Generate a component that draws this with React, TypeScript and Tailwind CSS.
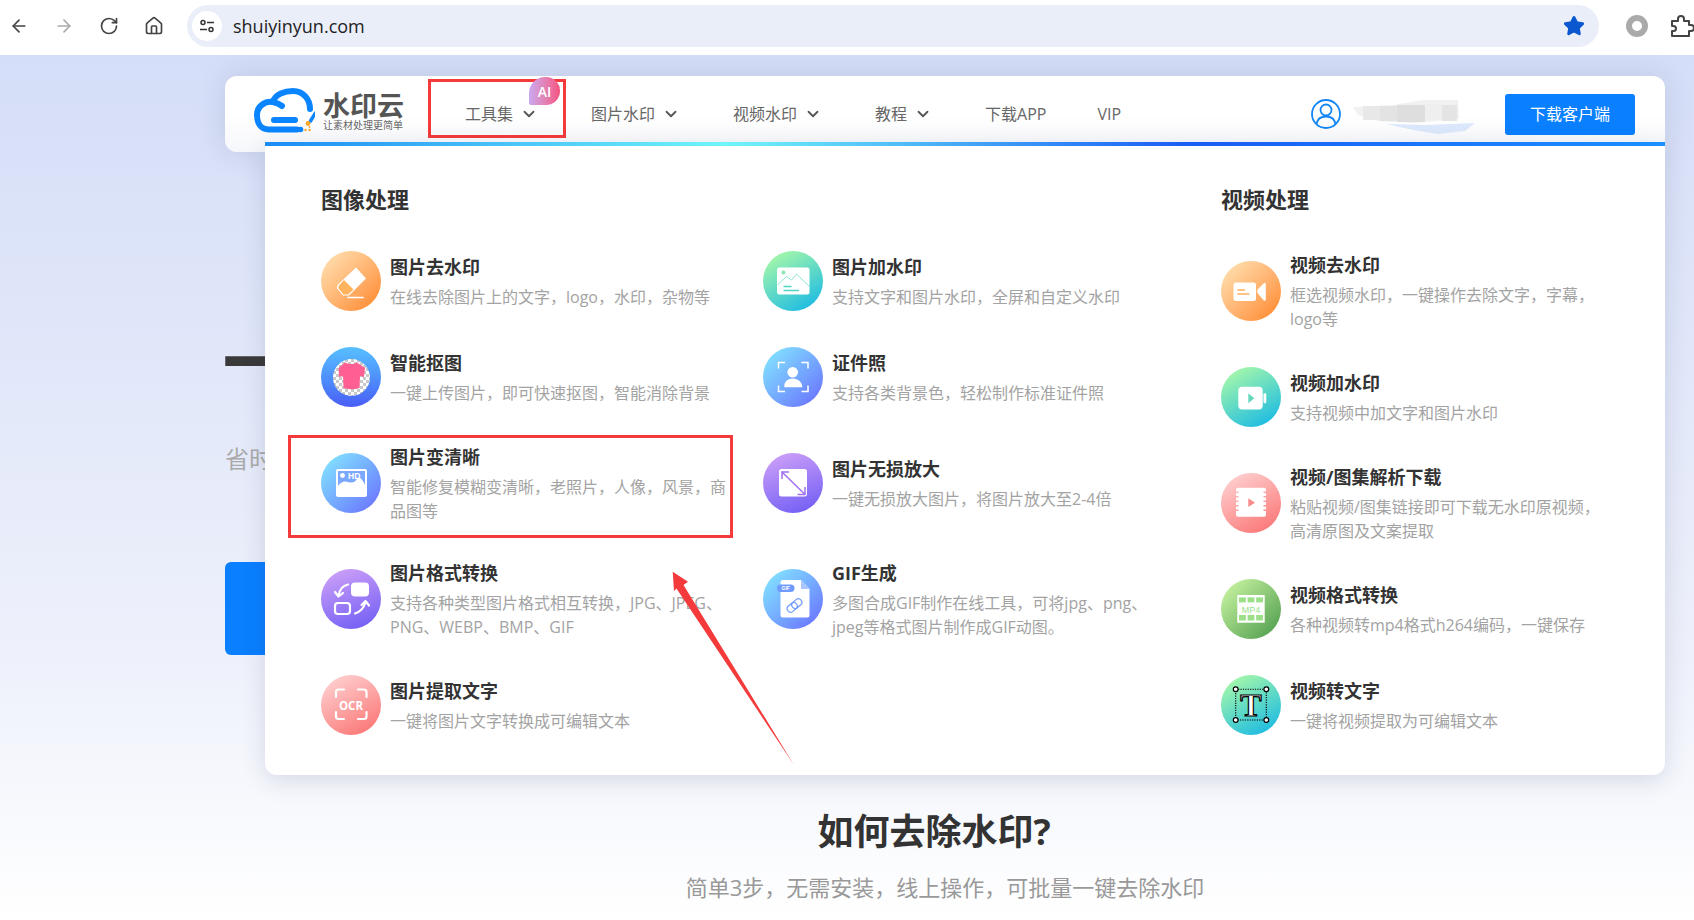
import React from "react";
import { ArrowLeft, ArrowRight, RotateCw, Home, Star, ChevronDown } from "lucide-react";

type Item = { title: string; desc: string; bg: string; icon: React.ReactNode };

const W = ({ children }: { children: React.ReactNode }) => (
  <svg viewBox="0 0 60 60" className="w-[60px] h-[60px]" fill="none">
    {children}
  </svg>
);

const EraserIcon = () => (
  <W>
    <path d="M35 16.5 45 27.5 28 44.5 22 44.5 16 37.5 Q15.5 35 17 33.5Z" fill="#fff" />
    <path d="M23 29 32.5 38.5 27 43.5 22.5 43.5 17.5 37.5Q17 35.5 18 34.5Z" fill="#ffb35c" />
    <path d="M27 46.5H42" stroke="#fff" strokeWidth="1.6" strokeLinecap="round" />
  </W>
);

const CutoutIcon = () => (
  <W>
    <defs>
      <pattern id="chk" width="6" height="6" patternUnits="userSpaceOnUse">
        <rect width="6" height="6" fill="#fff" />
        <rect width="3" height="3" fill="#c9c9c9" />
        <rect x="3" y="3" width="3" height="3" fill="#c9c9c9" />
      </pattern>
    </defs>
    <circle cx="30.5" cy="30.5" r="18.5" fill="url(#chk)" />
    <path d="M24 15.5 Q30 18.5 36 15.5 L44 21 43 30 39 29 38.5 41 Q30 43.5 22.5 41 L22 29 18 30 17.5 21Z" fill="#ff5f92" />
  </W>
);

const HdIcon = () => (
  <W>
    <rect x="15" y="16" width="31" height="28" rx="2" fill="#fff" />
    <rect x="17" y="18" width="27" height="15" fill="#7ba8ff" />
    <path d="M17 33 Q21 27 27 29 T36 26 T44 32 V35 H17Z" fill="#fff" />
    <circle cx="21.5" cy="22.5" r="2.4" fill="#fff" />
    <text x="27" y="26" fontSize="8.5" fontWeight="700" fill="#fff" fontFamily="Liberation Sans, sans-serif">HD</text>
  </W>
);

const ConvertIcon = () => (
  <W>
    <rect x="30" y="13.5" width="18" height="14" rx="4" fill="#fff" />
    <rect x="14" y="34" width="15" height="11" rx="3" fill="none" stroke="#fff" strokeWidth="2.2" />
    <path d="M27 15.5 Q19 17 17.5 27" stroke="#fff" strokeWidth="2.2" strokeLinecap="round" />
    <path d="M14 23 17.5 27.5 22 24" stroke="#fff" strokeWidth="2.2" strokeLinecap="round" strokeLinejoin="round" />
    <path d="M34 44.5 Q42 42 44.5 33" stroke="#fff" strokeWidth="2.2" strokeLinecap="round" />
    <path d="M40.5 36 44.5 32 48 36.5" stroke="#fff" strokeWidth="2.2" strokeLinecap="round" strokeLinejoin="round" />
  </W>
);

const OcrIcon = () => (
  <W>
    <path d="M15 22V17Q15 14.5 17.5 14.5H23M37 14.5H43Q45.5 14.5 45.5 17V22M45.5 37V41.5Q45.5 44 43 44H37M23 44H17.5Q15 44 15 41.5V37" stroke="#fff" strokeWidth="2.2" strokeLinecap="round" />
    <text x="30" y="34.5" textAnchor="middle" fontSize="11.5" fontWeight="700" fill="#fff" fontFamily="Open Sans, sans-serif">OCR</text>
  </W>
);

const WatermarkIcon = () => (
  <W>
    <rect x="14" y="16.5" width="32.5" height="27" rx="2.5" fill="#fff" />
    <circle cx="20.5" cy="21.5" r="2" fill="#8fe6b4" />
    <path d="M14.5 34 23.5 25.5 28.5 29 33.5 23 46.5 35.5" stroke="#5fd8c4" strokeWidth="0.7" />
    <path d="M20.5 35.5H28.5M20.5 39.5H36" stroke="#4fd6c0" strokeWidth="1.3" />
  </W>
);

const IdIcon = () => (
  <W>
    <path d="M15.5 21.5V15.5H22M38.5 15.5H45V21.5M45 38.5V44.5H38.5M22 44.5H15.5V38.5" stroke="#fff" strokeWidth="1.5" />
    <circle cx="29.7" cy="25.3" r="5.3" fill="#fff" />
    <path d="M21.3 40.3Q20.8 32 29.7 31.5 38.8 32 39.3 40.3Z" fill="#fff" />
  </W>
);

const EnlargeIcon = () => (
  <W>
    <rect x="16" y="16" width="28" height="27.5" rx="2.5" fill="#fff" />
    <path d="M19 19 41.5 41" stroke="#a06ff2" strokeWidth="1.5" />
    <path d="M19 26V19H26M34.5 41.5H42V34" stroke="#a06ff2" strokeWidth="1.5" />
  </W>
);

const GifIcon = () => (
  <W>
    <path d="M20 11H38L46.5 20V46Q46.5 48.5 44 48.5H20Q17.5 48.5 17.5 46V13.5Q17.5 11 20 11Z" fill="#fff" />
    <path d="M38 11 46.5 20H38Z" fill="#a9c6ff" />
    <rect x="14" y="15.5" width="17.5" height="7.5" rx="3.7" fill="#6f9bff" />
    <text x="22.7" y="21.3" textAnchor="middle" fontSize="5" fontWeight="700" fill="#fff" fontFamily="Liberation Sans, sans-serif">GIF</text>
    <g stroke="#6f9bff" strokeWidth="1.2" transform="rotate(-40 31.5 36.5)">
      <rect x="23" y="33" width="11" height="7" rx="3.5" />
      <rect x="29" y="33" width="11" height="7" rx="3.5" />
    </g>
  </W>
);

const VideoEraseIcon = () => (
  <W>
    <rect x="12.5" y="21.5" width="22.5" height="18.5" rx="2.5" fill="#fff" />
    <path d="M36.3 29.5Q36.3 28.5 37.3 27.8L42.8 22.2Q44.8 21 44.8 23.5V38Q44.8 40.5 42.8 39.4L37.3 33Q36.3 32 36.3 31Z" fill="#fff" />
    <path d="M16.3 29H24M16.3 33H28.3" stroke="#ffae5c" strokeWidth="1.7" />
  </W>
);

const VideoAddIcon = () => (
  <W>
    <rect x="17.3" y="19.7" width="24.4" height="22.7" rx="4" fill="#fff" />
    <rect x="42.5" y="26.3" width="2.8" height="10" rx="1.2" fill="#fff" />
    <path d="M27.3 26.3 33.3 31.3 27.3 36.3Z" fill="#63d8bc" />
  </W>
);

const VideoParseIcon = () => (
  <W>
    <path d="M17 14.7H43Q45 14.7 45 16.7V18.5H42.5V20H45V23H42.5V24.5H45V27.5H42.5V29H45V32H42.5V33.5H45V36.5H42.5V38H45V41.7Q45 43.7 43 43.7H17Q15 43.7 15 41.7V38H17.5V36.5H15V33.5H17.5V32H15V29H17.5V27.5H15V24.5H17.5V23H15V20H17.5V18.5H15V16.7Q15 14.7 17 14.7Z" fill="#fff" />
    <path d="M27.3 25.3 34 29.7 27.3 34Z" fill="#fb8b8b" />
  </W>
);

const Mp4Icon = () => (
  <W>
    <rect x="16.3" y="16" width="27.4" height="27.7" fill="#fff" />
    <g fill="#9bdf87">
      <rect x="18" y="18.4" width="6.8" height="5" />
      <rect x="26.6" y="18.4" width="6.8" height="5" />
      <rect x="35.2" y="18.4" width="6.8" height="5" />
      <rect x="18" y="36" width="6.8" height="5.5" />
      <rect x="26.6" y="36" width="6.8" height="5.5" />
      <rect x="35.2" y="36" width="6.8" height="5.5" />
    </g>
    <text x="30" y="33.5" textAnchor="middle" fontSize="9" fill="#9bdf87" fontFamily="Liberation Sans, sans-serif">MP4</text>
  </W>
);

const VideoTextIcon = () => (
  <W>
    <rect x="14.7" y="14.3" width="30.6" height="30.7" stroke="#000" strokeWidth="1.1" strokeDasharray="1.2 1.2" />
    {[[14.7, 14.3], [45.3, 14.3], [14.7, 45], [45.3, 45]].map(([x, y]) => (
      <circle key={x + "-" + y} cx={x} cy={y} r="2.4" fill="#fff" stroke="#000" strokeWidth="1.2" />
    ))}
    <text x="30" y="41" textAnchor="middle" fontSize="32" fontWeight="700" fill="#fff" stroke="#000" strokeWidth="1.2" fontFamily="Liberation Serif, serif">T</text>
  </W>
);

const orange = "bg-linear-to-br from-[#ffe6b8] to-[#ff8416]";
const sky = "bg-linear-to-br from-[#85ecff] to-[#6a68ff]";
const purple = "bg-[linear-gradient(160deg,#d3a4f8,#6c5af5)]";
const pink = "bg-[linear-gradient(150deg,#ffd9d9,#fb6d6d)]";
const mint = "bg-[linear-gradient(150deg,#b6ffa2,#0cb4ea)]";

const leftItems: Item[] = [
  { title: "图片去水印", desc: "在线去除图片上的文字，logo，水印，杂物等", bg: orange, icon: <EraserIcon /> },
  { title: "图片加水印", desc: "支持文字和图片水印，全屏和自定义水印", bg: mint, icon: <WatermarkIcon /> },
  { title: "智能抠图", desc: "一键上传图片，即可快速抠图，智能消除背景", bg: "bg-linear-to-b from-[#58c0ff] to-[#4a5cf6]", icon: <CutoutIcon /> },
  { title: "证件照", desc: "支持各类背景色，轻松制作标准证件照", bg: sky, icon: <IdIcon /> },
  { title: "图片变清晰", desc: "智能修复模糊变清晰，老照片，人像，风景，商品图等", bg: sky, icon: <HdIcon /> },
  { title: "图片无损放大", desc: "一键无损放大图片，将图片放大至2-4倍", bg: purple, icon: <EnlargeIcon /> },
  { title: "图片格式转换", desc: "支持各种类型图片格式相互转换，JPG、JPEG、PNG、WEBP、BMP、GIF", bg: purple, icon: <ConvertIcon /> },
  { title: "GIF生成", desc: "多图合成GIF制作在线工具，可将jpg、png、jpeg等格式图片制作成GIF动图。", bg: sky, icon: <GifIcon /> },
  { title: "图片提取文字", desc: "一键将图片文字转换成可编辑文本", bg: pink, icon: <OcrIcon /> },
];

const rightItems: Item[] = [
  { title: "视频去水印", desc: "框选视频水印，一键操作去除文字，字幕，logo等", bg: orange, icon: <VideoEraseIcon /> },
  { title: "视频加水印", desc: "支持视频中加文字和图片水印", bg: mint, icon: <VideoAddIcon /> },
  { title: "视频/图集解析下载", desc: "粘贴视频/图集链接即可下载无水印原视频，高清原图及文案提取", bg: pink, icon: <VideoParseIcon /> },
  { title: "视频格式转换", desc: "各种视频转mp4格式h264编码，一键保存", bg: "bg-linear-to-br from-[#d2fba8] to-[#46994a]", icon: <Mp4Icon /> },
  { title: "视频转文字", desc: "一键将视频提取为可编辑文本", bg: mint, icon: <VideoTextIcon /> },
];

const MenuItem = ({ item, width, boxed }: { item: Item; width: string; boxed?: boolean }) => (
  <div className="relative flex items-center">
    <div className={`w-[60px] h-[60px] rounded-full shrink-0 overflow-hidden ${item.bg}`}>{item.icon}</div>
    <div className={`ml-[9px] ${width}`}>
      <div className="h-[28px] mb-[4px] text-[18px] leading-[28px] font-bold text-[#333]">{item.title}</div>
      <div className="text-[16px] leading-[24px] text-[#a3a3a3]">{item.desc}</div>
    </div>
    {boxed && <div className="absolute -left-[33px] right-[30px] -top-[8px] -bottom-[15px] border-[3px] border-[#f43a3a]" />}
  </div>
);

const navItems = [
  { label: "工具集", arrow: true },
  { label: "图片水印", arrow: true },
  { label: "视频水印", arrow: true },
  { label: "教程", arrow: true },
  { label: "下载APP", arrow: false },
];

export default function App() {
  return (
    <div className="relative h-screen w-full overflow-hidden flex flex-col font-['Open_Sans','Noto_Sans_CJK_SC',sans-serif]">
      {/* browser bar */}
      <div className="h-[55px] bg-white flex items-center pl-[9px] pb-[3px] shrink-0">
        <div className="flex items-center gap-[25px] text-[#444]">
          <ArrowLeft size={20} />
          <ArrowRight size={20} className="text-[#aaa]" />
          <RotateCw size={20} />
          <Home size={20} />
        </div>
        <div className="ml-[23px] w-[1416px] h-[42px] rounded-full bg-[#eaeef8] flex items-center pl-[5px] pr-[14px]">
          <div className="w-[30px] h-[30px] rounded-full bg-white flex items-center justify-center">
            <svg width="16" height="16" viewBox="0 0 16 16" fill="none" stroke="#333" strokeWidth="1.5">
              <circle cx="4" cy="4.5" r="2" />
              <path d="M8 4.5h7M1 11.5h7" />
              <circle cx="12" cy="11.5" r="2" />
            </svg>
          </div>
          <span className="ml-[11px] text-[18px] text-[#222]">shuiyinyun.com</span>
          <Star size={22} className="ml-auto text-[#0b57d0] fill-[#0b57d0]" />
        </div>
        <div className="ml-[27px] w-[22px] h-[22px] rounded-full border-[6px] border-[#aaa]" />
        <svg viewBox="0 0 24 24" className="ml-[22px] w-[24px] h-[24px] shrink-0" fill="none" stroke="#444" strokeWidth="2" strokeLinejoin="round">
          <path d="M2 7H8V5Q8 2 11 2T14 5V7H19V11H21Q24 11 24 14T21 17H19V22H2V17H3.5Q6 17 6 14.5T3.5 12H2Z" />
        </svg>
      </div>

      {/* page */}
      <div className="relative flex-1 pl-[225px] bg-linear-to-b from-[#d5def8] via-[#eef1fb] via-70% to-white">
        <div className="w-[1440px] pt-[21px]">
          <div className="relative z-10 h-[76px] rounded-xl bg-linear-to-b from-white via-white via-50% to-[#f6f7fb] shadow-[0_0_30px_rgba(30,40,80,0.13)] flex items-center pl-[20px] pr-[30px]">
            <svg viewBox="0 0 70 60" className="w-[70px] h-[60px] shrink-0 -mt-[12px]" fill="none">
              <path d="M52 51.5H24C15 51.5 12 44 12 37 12 28 20 23 28 24 30 16 40 13 48 13 58 13 65 21 65 31" stroke="#0a84ff" strokeWidth="6" strokeLinecap="round" />
              <path d="M28 24Q33 25 37 28" stroke="#0a84ff" strokeWidth="6" strokeLinecap="round" />
              <path d="M29 42H50" stroke="#0a84ff" strokeWidth="6" strokeLinecap="round" />
              <circle cx="55.5" cy="51.5" r="2.8" fill="#0a84ff" />
              <path d="M70.5 35 65.5 43" stroke="#0a84ff" strokeWidth="3.5" strokeLinecap="round" />
              <circle cx="63" cy="45.5" r="2.4" fill="#f5a623" />
              <circle cx="60.5" cy="52" r="1.2" fill="#f5a623" />
              <circle cx="64.5" cy="52" r="1.2" fill="#f5a623" />
              <circle cx="64.5" cy="49" r="0.9" fill="#f5a623" />
            </svg>
            <div className="ml-[8px] w-[82px] shrink-0 -mt-[2px]">
              <div className="text-[27px] leading-[24px] font-bold text-[#555] whitespace-nowrap">水印云</div>
              <div className="text-[10px] leading-[14px] text-[#666] whitespace-nowrap">让素材处理更简单</div>
            </div>
            <nav className="ml-[60px] flex items-center gap-[53px] text-[16px] text-[#666]">
              {navItems.map((n) => (
                <div key={n.label} className="flex items-center gap-[7px]">
                  <span className="whitespace-nowrap">{n.label}</span>
                  {n.arrow && <ChevronDown size={18} strokeWidth={2.4} className="text-[#555]" />}
                </div>
              ))}
              <span className="-ml-[2px]">VIP</span>
            </nav>
            <div className="ml-auto flex items-center">
              <svg viewBox="0 0 30 30" className="w-[30px] h-[30px]" fill="none" stroke="#1486f5" strokeWidth="1.8">
                <circle cx="15" cy="15" r="14" />
                <circle cx="15" cy="11" r="5.5" />
                <path d="M5.5 25C6.5 19 11 17.5 15 17.5S23.5 19 24.5 25" />
              </svg>
              {/* blurred user name */}
              <svg viewBox="0 0 130 40" className="ml-[12px] mt-[6px] w-[130px] h-[40px]">
                <path d="M0 10 L40 8 L70 3 L105 3 L106 22 L60 26 L25 24 L5 18Z" fill="#f1f1f1" />
                <rect x="10" y="9" width="17" height="14" fill="#e8e8e8" />
                <rect x="27" y="9" width="17" height="15" fill="#e3e3e3" />
                <rect x="44" y="8" width="28" height="17" fill="#dedede" />
                <rect x="72" y="7" width="17" height="16" fill="#efefef" />
                <rect x="89" y="8" width="15" height="16" fill="#e4e4e4" />
                <path d="M33 27 L75 28 L122 26 L112 34 L85 37 L60 33Z" fill="#dbe7fa" />
              </svg>
              <button className="ml-[22px] w-[130px] h-[41px] rounded-[3px] bg-[#0a7fff] text-white text-[16px]">下载客户端</button>
            </div>

            {/* AI tag + highlight around 工具集 */}
            <div className="absolute left-[203px] top-[3px] w-[138px] h-[59px] border-[3px] border-[#f43a3a]" />
            <div className="absolute left-[304px] top-[1px] w-[31px] h-[28px] rounded-[16px_14px_14px_2px] bg-linear-to-r from-[#c8a8f0] to-[#f4517f] flex items-center justify-center text-white text-[14px] font-semibold">AI</div>

            {/* dropdown panel */}
            <div className="absolute left-[40px] top-[66px] w-[1400px] h-[633px] rounded-b-xl bg-white shadow-[0_6px_24px_rgba(30,40,80,0.14)]">
              <div className="h-[4px] bg-[linear-gradient(90deg,#1a8cf5,#70f5fa_33%,#1a5cf5_66%,#1a90ff)]" />
              <div className="flex pl-[56px] pt-[38px]">
                <div className="w-[900px] shrink-0">
                  <div className="text-[22px] leading-[30px] font-bold text-[#333] mb-[37px]">图像处理</div>
                  <div className="grid grid-cols-[442px_1fr] grid-rows-[60px_60px_80px_80px_60px] gap-y-[36px] items-center">
                    {leftItems.map((it) => (
                      <MenuItem key={it.title} item={it} width={it.title === "GIF生成" ? "w-[345px]" : "w-[340px]"} boxed={it.title === "图片变清晰"} />
                    ))}
                  </div>
                </div>
                <div>
                  <div className="text-[22px] leading-[30px] font-bold text-[#333] mb-[37px]">视频处理</div>
                  <div className="flex flex-col gap-[36px]">
                    {rightItems.map((it) => (
                      <MenuItem key={it.title} item={it} width="w-[320px]" />
                    ))}
                  </div>
                </div>
              </div>
            </div>
          </div>

          {/* page content behind the menu */}
          <h1 className="mt-[180px] -ml-[1px] text-[60px] leading-[60px] font-bold text-[#3a3a3a] [-webkit-text-stroke:2px_#3a3a3a]">一</h1>
          <p className="mt-[51px] text-[24px] leading-[32px] text-[#aaa]">省时</p>
          <div className="mt-[87px] w-[300px] h-[93px] rounded-md bg-[#0a7fff]" />
          <h2 className="mt-[153px] pr-[22px] text-center text-[36px] leading-[48px] font-bold text-[#333]">如何去除水印?</h2>
          <p className="mt-[15px] text-center text-[22px] leading-[32px] text-[#999]">简单3步，无需安装，线上操作，可批量一键去除水印</p>
        </div>
      </div>

      {/* red annotation arrow */}
      <svg className="absolute left-0 top-0 w-[1694px] h-[920px] pointer-events-none z-20" viewBox="0 0 1694 920">
        <path d="M672.7 571.7 688 581.7 683.5 585 794 765 676.5 588.5 674 591Z" fill="#f43a3a" />
      </svg>
    </div>
  );
}
